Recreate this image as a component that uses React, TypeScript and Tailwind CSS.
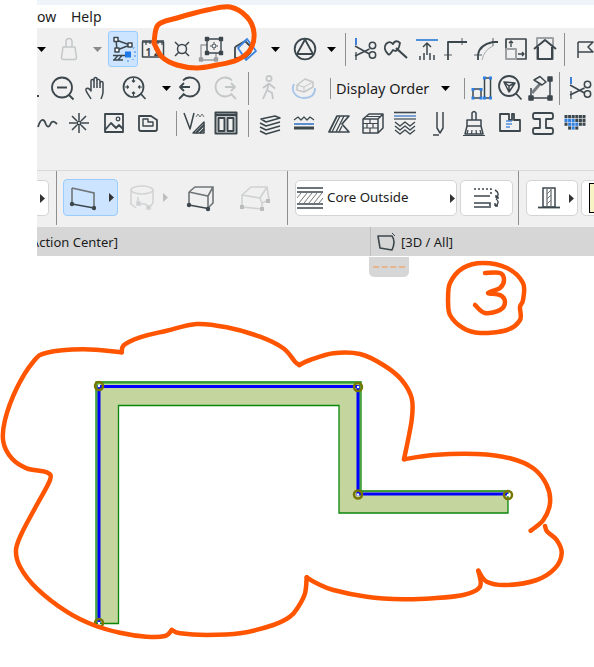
import React from "react";

const D = "#3c474d";
const G = "#c4c7c8";
const B = "#2f7fe0";

function S({ w, children }: { w: string; children?: React.ReactNode }) {
  return <div className={`flex flex-none items-center justify-center ${w}`}>{children}</div>;
}

function I({ children, c = D, sw = 1.5 }: { children: React.ReactNode; c?: string; sw?: number }) {
  return (
    <svg viewBox="0 0 30 30" fill="none" stroke={c} strokeWidth={sw} strokeLinejoin="round" className="h-[30px] w-[30px] flex-none overflow-visible">
      {children}
    </svg>
  );
}

function Tri({ gray }: { gray?: boolean }) {
  return (
    <svg viewBox="0 0 9 5" className="h-[5px] w-[9px] flex-none">
      <path d="M0 0H9L4.5 5Z" fill={gray ? "#8a8a8a" : "#000"} />
    </svg>
  );
}

function Sep({ h }: { h: string }) {
  return <div className={`w-px flex-none bg-[#8f8f8f] ${h}`} />;
}

function Arrow({ gray }: { gray?: boolean }) {
  return (
    <svg viewBox="0 0 5 9" className="h-[9px] w-[5px] flex-none">
      <path d="M0 0L5 4.5L0 9Z" fill={gray ? "#bdbdbd" : "#333"} />
    </svg>
  );
}

function Scissors() {
  return (
    <I>
      <path d="M5 4V11" stroke="#3f7fd8" strokeWidth={2} />
      <path d="M5 18V26" stroke="#7e8588" strokeWidth={2} />
      <path d="M4 12L18.5 20M4 22L18.5 15" />
      <circle cx={21.5} cy={11.5} r={3.2} />
      <circle cx={21.5} cy={21} r={3.2} />
    </I>
  );
}

function Button({ w, children }: { w: string; children: React.ReactNode }) {
  return (
    <div className={`flex h-[36px] flex-none items-center rounded-[5px] border border-[#d4d4d4] bg-white ${w}`}>{children}</div>
  );
}

type P = [number, number];

function spline(pts: P[]) {
  let d = `M${pts[0][0]} ${pts[0][1]}`;
  for (let i = 0; i < pts.length - 1; i++) {
    const p0 = pts[Math.max(i - 1, 0)];
    const p1 = pts[i];
    const p2 = pts[i + 1];
    const p3 = pts[Math.min(i + 2, pts.length - 1)];
    const c1x = p1[0] + (p2[0] - p0[0]) / 6;
    const c1y = p1[1] + (p2[1] - p0[1]) / 6;
    const c2x = p2[0] - (p3[0] - p1[0]) / 6;
    const c2y = p2[1] - (p3[1] - p1[1]) / 6;
    d += `C${c1x.toFixed(1)} ${c1y.toFixed(1)} ${c2x.toFixed(1)} ${c2y.toFixed(1)} ${p2[0]} ${p2[1]}`;
  }
  return d;
}

const z5 = (a: number[]) => {
  const r: P[] = [];
  for (let i = 0; i < a.length; i += 2) r.push([+(a[i] / 3).toFixed(1), +(a[i + 1] / 3 + 310).toFixed(1)]);
  return r;
};
const z6 = (a: number[]) => {
  const r: P[] = [];
  for (let i = 0; i < a.length; i += 2) r.push([+(a[i] / 3 + 290).toFixed(1), +(a[i + 1] / 3 + 340).toFixed(1)]);
  return r;
};

const cloud: P[][] = [
  [
    ...z5([365, 127, 372, 105, 420, 82, 500, 62, 590, 42, 680, 52, 780, 80, 850, 115, 885, 155]),
    ...z6([28, 75]),
  ],
  z6([28, 75, 60, 60, 130, 40, 210, 42, 280, 75, 335, 120, 365, 175, 365, 240, 342, 358]),
  z6([342, 358, 430, 345, 560, 342, 660, 355, 730, 385, 770, 435, 780, 490, 760, 540, 722, 572]),
  z6([765, 558, 772, 575, 800, 600, 815, 640, 795, 685, 740, 720, 650, 735, 590, 725, 565, 692]),
  z6([565, 692, 570, 740, 520, 765, 430, 775, 340, 778, 230, 770, 130, 750, 80, 730, 50, 712]),
  [
    ...z6([50, 712, 45, 760, 25, 800]),
    ...z5([870, 920, 820, 945, 720, 970, 620, 975, 540, 970, 515, 960]),
  ],
  z5([515, 960, 495, 978, 440, 980, 360, 968, 280, 945, 200, 905, 110, 835, 60, 770, 48, 720, 65, 670, 110, 585, 150, 510, 140, 487, 80, 475, 35, 445, 10, 395, 15, 330, 50, 235, 100, 155, 140, 128, 250, 118, 365, 127]),
];

const loop1: P[] = [[154, 43], [158, 25], [177, 18], [207, 10], [230, 7], [247, 17], [254, 33], [250, 50], [237, 60], [217, 65], [197, 68], [177, 65], [162, 57], [154, 43]];
const ring: P[] = [[448, 300], [450, 283], [463, 268], [483, 263], [507, 268], [523, 283], [523, 300], [520, 307], [520, 320], [507, 330], [480, 333], [463, 328], [450, 315], [448, 300]];
const three: P[] = [[485, 273], [500, 273], [504, 280], [500, 288], [488, 293], [500, 295], [505, 302], [500, 310], [485, 313], [475, 305]];

const nodes: P[] = [[99, 386], [99, 623], [358, 387], [358, 494.5], [508, 495]];

export default function App() {
  const gridCells: React.ReactNode[] = [];
  for (let r = 0; r < 4; r++) {
    for (let c = 0; c < 6; c++) {
      if (r === 3 && (c < 1 || c > 3)) continue;
      const blue = (r === 1 && c < 3) || (r === 2 && c >= 1 && c < 4) || (r === 3 && c === 2);
      gridCells.push(<rect key={`${r}-${c}`} x={4.5 + c * 3.6} y={7 + r * 3.8} width={3} height={3.2} fill={blue ? "#2f7fe0" : D} stroke="none" />);
    }
  }

  return (
    <div className="relative flex h-[667px] w-[594px] flex-col overflow-hidden bg-white font-['Noto_Sans',sans-serif] text-[#111]">
      <div className="ml-[37px] flex h-[256px] flex-none flex-col overflow-hidden">
        <div className="h-[5px] flex-none bg-[#eff4fa]" />
        <div className="flex h-[23px] flex-none items-center overflow-hidden text-[14px] text-[#1c1c1c]">
          <span className="w-[34px] flex-none whitespace-nowrap">ow</span>
          <span>Help</span>
        </div>

        <div className="flex flex-none flex-col bg-[#f0f0f0] pt-[3px]">
          {/* row 1 */}
          <div className="flex h-[36px] items-center">
            <S w="w-[8px]"><Tri /></S>
            <S w="w-[48px]">
              <I c={G}>
                <path d="M12 13V8Q12 4.5 15 4.5Q18 4.5 18 8V13" />
                <path d="M9 13H21L22.5 23.5Q22.5 25.5 20.5 25.5H9.5Q7.5 25.5 7.5 23.5Z" />
              </I>
            </S>
            <S w="w-[8px]"><Tri gray /></S>
            <div className="ml-[7px] flex h-[36px] w-[30px] flex-none items-center justify-center rounded-[3px] border border-[#99ccff] bg-[#cce4ff]">
              <I>
                <path d="M8 6L22 11L9 16Z" />
                <rect x={6} y={3.5} width={4} height={4} fill="#fff" />
                <rect x={20} y={9} width={4} height={4} fill="#fff" />
                <rect x={7} y={14} width={4} height={4} fill="#fff" />
                <path d="M5 21.5H17M5 26H15M6 26L10 21.5M10 26L14 21.5" strokeWidth={1.3} />
                <rect x={17} y={17.5} width={6} height={6} fill="#1e78e6" stroke="none" />
                <path d="M25 14.5l1.5-1M26 18h2M26 22h2M24.5 25l1 1M20 26v2" stroke="#3f8be6" strokeWidth={1} />
              </I>
            </div>
            <S w="w-[30px]">
              <I>
                <rect x={4.5} y={8} width={21} height={15} />
                <path d="M4 6.8H26M8 7v4M12 7v3M16 7v4M20 7v3M24 7v4" strokeWidth={1.2} />
                <text x={7.5} y={21.5} fontSize={10} fontWeight={700} fill={D} stroke="none">1 2</text>
              </I>
            </S>
            <S w="w-[28px]">
              <I>
                <circle cx={15} cy={15} r={4.5} />
                <path d="M8 8L12 12M22 8L18 12M8 22L12 18M22 22L18 18" />
              </I>
            </S>
            <S w="w-[30px]">
              <I sw={1.4}>
                <path d="M5 11H20V26H5Z" stroke="#9a9da0" />
                <rect x={3.5} y={24} width={3} height={3} stroke="#9a9da0" fill="#9a9da0" />
                <rect x={18.5} y={24} width={3} height={3} stroke="#9a9da0" fill="#9a9da0" />
                <path d="M11 5H25V19H11Z" fill="#f0f0f0" />
                <rect x={9.5} y={3.5} width={3} height={3} fill={D} />
                <rect x={23.5} y={3.5} width={3} height={3} fill={D} />
                <rect x={9.5} y={17.5} width={3} height={3} fill={D} />
                <rect x={23.5} y={17.5} width={3} height={3} fill={D} />
                <circle cx={18} cy={12} r={2} strokeWidth={1} />
                <path d="M18 8V9.5M18 14.5V16M14 12H15.5M20.5 12H22" strokeWidth={1} />
              </I>
            </S>
            <S w="w-[38px]">
              <I>
                <path d="M5 13L15 7L21 13M5 13V24H15L21 18" strokeWidth={1.8} />
                <path d="M17 5L26 17L16 26L8 14Z" stroke="#3d85e0" strokeWidth={1.8} />
              </I>
            </S>
            <S w="w-[22px]"><Tri /></S>
            <S w="w-[38px]">
              <I sw={1.8}>
                <circle cx={15} cy={15} r={10.3} />
                <path d="M15 5.5L23 20H7Z" />
              </I>
            </S>
            <S w="w-[14px]"><Tri /></S>
            <S w="w-[14px]"><Sep h="h-[33px]" /></S>
            <S w="w-[28px]"><Scissors /></S>
            <S w="w-[32px]">
              <I sw={1.8}>
                <path d="M5 10C8 7 10 8 12 10C14 6 17 7 19 9L18 13C17 16 15 18 12 16C10 19 8 22 7 20C4 17 3 13 5 10Z" />
                <path d="M15 14L26 24" strokeWidth={2.2} />
              </I>
            </S>
            <S w="w-[30px]">
              <I>
                <path d="M4 6H26" stroke="#4f8fdc" strokeWidth={2} />
                <path d="M15 9V21M11 13L15 9L19 13" />
                <path d="M8 26V22M12 26V19M18 26V19M22 26V21" />
              </I>
            </S>
            <S w="w-[28px]">
              <I>
                <path d="M21 4V11M3 21H11" stroke="#8b9093" />
                <path d="M7 26V8H26" strokeWidth={1.8} />
              </I>
            </S>
            <S w="w-[32px]">
              <I>
                <path d="M22 4V12M3 21H11" stroke="#8b9093" />
                <path d="M7 26V21Q8 11 22 8H27" strokeWidth={1.8} />
                <path d="M11 26Q13 16 22 12" stroke="#a7abad" strokeWidth={1} />
              </I>
            </S>
            <S w="w-[28px]">
              <I>
                <path d="M15 5H25V25H15M5 15V5H15" strokeWidth={1.7} />
                <rect x={5} y={15} width={10} height={10} stroke="#9ea1a3" strokeWidth={2} />
                <path d="M10 13V7M8 9L10 7L12 9M17 20H23M21 18L23 20L21 22" strokeWidth={1.3} />
              </I>
            </S>
            <S w="w-[30px]">
              <I>
                <rect x={7} y={4} width={16} height={21} stroke="#a0a3a5" strokeWidth={2} />
                <path d="M4 15L15 6L26 15M8 13V25H22V13" strokeWidth={2} />
              </I>
            </S>
            <S w="w-[8px]"><Sep h="h-[33px]" /></S>
            <S w="w-[34px]">
              <I>
                <path d="M8 8V24M8 8H23L18 13L23 18H8" />
              </I>
            </S>
          </div>

          {/* row 2 */}
          <div className="flex h-[42px] items-center">
            <S w="w-[10px]"><div className="h-[2px] w-[2px] translate-x-[-4px] translate-y-[8px] bg-[#3c474d]" /></S>
            <S w="w-[30px]">
              <I sw={1.8}>
                <circle cx={15} cy={14.5} r={10} />
                <path d="M10 14.5H20M22 22L26.5 26.5" />
              </I>
            </S>
            <S w="w-[38px]">
              <I>
                <path d="M10 26C8 22 4 18 5 16C6 14 9 16 10 18V8C10 6 13 6 13 8V6C13 4 16 4 16 6V7C16 6 19 6 19 8V10C19 8 22 8 22 10V19C22 22 21 24 20 26" />
                <path d="M13 8V15M16 7V15M19 10V15" />
              </I>
            </S>
            <S w="w-[38px]">
              <I sw={1.7}>
                <circle cx={14.5} cy={14} r={10} />
                <path d="M14.5 5V9M13 7.5L14.5 9L16 7.5M5.5 14H9.5M8 12.5L9.5 14L8 15.5M23.5 14H19.5M21 12.5L19.5 14L21 15.5M14.5 23V19M13 20.5L14.5 19L16 20.5" strokeWidth={1.2} />
                <path d="M22 21L26.5 26" />
              </I>
            </S>
            <S w="w-[26px]"><Tri /></S>
            <S w="w-[22px]">
              <I sw={1.8}>
                <path d="M8 7.5A9.5 9.5 0 1 1 8 20.5" />
                <path d="M5 14H15M9 10L5 14L9 18M9 21L4 26" />
              </I>
            </S>
            <div className="ml-[4px] flex w-[40px] flex-none items-center justify-center">
              <I sw={1.8} c={G}>
                <path d="M22 7.5A9.5 9.5 0 1 0 22 20.5" />
                <path d="M25 14H15M21 10L25 14L21 18M21 21L26 26" />
              </I>
            </div>
            <S w="w-[6px]"><Sep h="h-[33px]" /></S>
            <S w="w-[36px]">
              <I c={G} sw={1.8}>
                <circle cx={15} cy={5.5} r={2.6} />
                <path d="M15 10L13 17L9 26M13 17L18 20L19 26M15 10.5L9 15M15 10.5L21 15.5" />
              </I>
            </S>
            <S w="w-[34px]">
              <I c="#c5c7c8">
                <path d="M8 12L16 6L24 9V14L15 19L8 17Z" />
                <path d="M8 12L15 14L24 9M15 14V19" strokeWidth={1} />
                <path d="M5 11C1 19 8 25 15 25C20 25 26 23 26 15" stroke="#a8c6e8" strokeWidth={1.8} />
              </I>
            </S>
            <div className="ml-[5px] flex w-[8px] flex-none justify-center"><Sep h="h-[21px]" /></div>
            <span className="ml-[2px] w-[95px] flex-none whitespace-nowrap pt-[1px] text-[14.5px] text-[#1c1c1c]">Display Order</span>
            <S w="w-[28px]"><Tri /></S>
            <S w="w-[10px]"><Sep h="h-[21px]" /></S>
            <S w="w-[24px]">
              <I>
                <rect x={7} y={16} width={8} height={9} strokeWidth={1.5} />
                <rect x={18.5} y={5} width={6} height={20} strokeWidth={1.5} />
                <path d="M5.5 15h3v3h-3zM13.5 15h3v3h-3zM5.5 23.5h3v3h-3zM13.5 23.5h3v3h-3zM17 3.5h3v3h-3zM23 3.5h3v3h-3zM17 23.5h3v3h-3zM23 23.5h3v3h-3z" fill={B} stroke="none" />
              </I>
            </S>
            <S w="w-[34px]">
              <I sw={1.8}>
                <circle cx={14} cy={13} r={10} />
                <path d="M9 9L20 10L14 19Z M14 13L9 9M14 13L20 10M14 13V19" strokeWidth={1.5} />
                <path d="M21 20.5L26.5 26.5" />
              </I>
            </S>
            <S w="w-[26px]">
              <I sw={1.5}>
                <path d="M25 6V25H6V15" />
                <rect x={23} y={4} width={4} height={4} fill={D} />
                <rect x={23} y={23} width={4} height={4} fill={D} />
                <rect x={4} y={23} width={4} height={4} fill={D} />
                <path d="M7 20L15 11" strokeWidth={3} stroke="#777d80" />
                <path d="M9 7L15 3.5L21 9L17 12Z" fill="#f0f0f0" />
              </I>
            </S>
            <S w="w-[12px]"><Sep h="h-[33px]" /></S>
            <S w="w-[32px]"><Scissors /></S>
          </div>

          {/* row 3 */}
          <div className="flex h-[28px] items-center">
            <S w="w-[20px]">
              <I sw={1.8}>
                <path d="M6 19C8 12 11 10 13 14C15 20 17 20 19 15C20 13 22 13 25 16" />
              </I>
            </S>
            <S w="w-[44px]">
              <I sw={1.5}>
                <circle cx={15} cy={15} r={1.8} />
                <path d="M15 5V12.5M15 17.5V25M5 15H12.5M17.5 15H25M8 8L13 13M17 17L22 22M22 8L17 13M13 17L8 22" />
              </I>
            </S>
            <S w="w-[26px]">
              <I sw={1.8}>
                <rect x={6} y={6} width={18} height={18} />
                <path d="M6 22L12 15L17 20L20 17L24 21" />
                <circle cx={19} cy={11} r={1.8} strokeWidth={1.3} />
              </I>
            </S>
            <S w="w-[42px]">
              <I sw={1.8}>
                <path d="M6 8H18L24 12V21Q24 23 22 23H8Q6 23 6 21Z" />
                <path d="M10 15V11H15V14H20V18H10Z" strokeWidth={1.4} />
              </I>
            </S>
            <S w="w-[14px]"><Sep h="h-[25px]" /></S>
            <S w="w-[22px]">
              <I>
                <path d="M5 5L11 21L15 5" />
                <path d="M17 9L19 6L21 9M21 9L23 6L25 9" stroke="#6f7578" strokeWidth={1} />
                <path d="M14 25L25 14V25Z" fill="#f0f0f0" />
                <path d="M17 25L25 17M21 25L25 21" strokeWidth={2} />
              </I>
            </S>
            <S w="w-[42px]">
              <I sw={2}>
                <rect x={4.5} y={4.5} width={21} height={21} />
                <path d="M4 7H26" strokeWidth={2.5} />
                <rect x={7.5} y={10} width={6} height={13} />
                <rect x={16.5} y={10} width={6} height={13} />
              </I>
            </S>
            <S w="w-[2px]"><Sep h="h-[27px]" /></S>
            <S w="w-[42px]">
              <I sw={1.6}>
                <path d="M6 11L20 8L25 10L11 14Z" />
                <path d="M5 15L11 18L25 14M5 19L11 22L25 18M5 23L11 26L25 22" />
              </I>
            </S>
            <S w="w-[26px]">
              <I>
                <path d="M5 12L9 9L12 12L15 9L18 12L21 9L25 12" strokeWidth={1.2} />
                <path d="M5 16H25" stroke="#5b8fd0" strokeWidth={2} />
                <path d="M5 20H25" strokeWidth={3} />
              </I>
            </S>
            <S w="w-[44px]">
              <I sw={1.7}>
                <path d="M5 24L13 8H25L18 16L25 24Z" />
                <path d="M8 24L16 8M12 24L20 8M15 24L18 18" strokeWidth={1.3} />
              </I>
            </S>
            <S w="w-[24px]">
              <I>
                <path d="M5 11H20V25H5ZM5 11L11 6H25L20 11M25 6V20L20 25" />
                <path d="M5 15.5H20M5 20H20M12 11V15.5M9 15.5V20M15 15.5V20M12 20V25" strokeWidth={1.2} />
                <path d="M8 8.5H22" strokeWidth={1} />
              </I>
            </S>
            <S w="w-[40px]">
              <I sw={1.4}>
                <path d="M4 4.5H26" strokeWidth={1.6} />
                <path d="M4 8H26" stroke="#5b8fd0" strokeWidth={1.6} />
                <path d="M4 11H26" strokeWidth={1.2} />
                <path d="M5 14L10 18L15 14L20 18L25 14M5 18L10 22L15 18L20 22L25 18M5 22L10 26L15 22L20 26L25 22" />
              </I>
            </S>
            <S w="w-[30px]">
              <I>
                <path d="M12 4V20L15 25L18 20V4" />
                <path d="M8 27H14" />
              </I>
            </S>
            <S w="w-[38px]">
              <I>
                <path d="M13 12V5Q15 2 17 5V12" />
                <path d="M8 12H22V18H8Z" />
                <path d="M8 18L6 26H24L22 18" />
                <path d="M4 27.5H26M9 22L8 26M13 22L12.5 26M17 22L17.5 26M21 22L22 26" strokeWidth={1.2} />
              </I>
            </S>
            <S w="w-[34px]">
              <I sw={1.8}>
                <path d="M5 6H14V12H17V6H19V12H25V23H5Z" />
                <path d="M11 13H17M11 16H17M11 19H15" stroke="#4f8fdc" strokeWidth={1.4} />
              </I>
            </S>
            <S w="w-[32px]">
              <I sw={1.8}>
                <path d="M7 5H23Q25 5 25 7V9Q25 11 23 11H18V20H23Q25 20 25 22V24Q25 26 23 26H7Q5 26 5 24V22Q5 20 7 20H12V11H7Q5 11 5 9V7Q5 5 7 5Z" />
              </I>
            </S>
            <S w="w-[32px]">
              <I>{gridCells}</I>
            </S>
          </div>

          <div className="h-[33px]" />
        </div>

        {/* row 4 */}
        <div className="flex h-[57px] flex-none border-t border-[#d9d9d9] bg-[#f0f0f0]">
          <div className="mt-[9px] flex h-[36px] w-[12px] flex-none items-center justify-center rounded-r-[5px] border border-l-0 border-[#d4d4d4] bg-white">
            <Arrow />
          </div>
          <div className="ml-[7px] h-[54px] w-px flex-none bg-[#8f8f8f]" />
          <div className="ml-[6px] mt-[8px] flex h-[37px] w-[55px] flex-none items-center rounded-[4px] border border-[#99ccff] bg-[#cce4ff]">
            <svg viewBox="0 0 36 30" fill="none" className="h-[30px] w-[36px] flex-none overflow-visible">
              <path d="M8 5L30 10V25" stroke="#6f7578" strokeWidth={1.6} />
              <path d="M8 5V21" stroke="#6f7578" strokeWidth={1.6} />
              <path d="M8 21L30 25" stroke={D} strokeWidth={1.6} />
              <circle cx={8} cy={21} r={2.2} fill={D} />
              <circle cx={30} cy={25} r={2.2} fill={D} />
            </svg>
            <div className="ml-[9px]"><Arrow /></div>
          </div>
          <div className="flex h-[54px] w-[54px] flex-none items-center justify-start">
            <svg viewBox="0 0 54 30" fill="none" className="h-[30px] w-[54px] flex-none overflow-visible" stroke="#d2d4d5" strokeWidth={1.6}>
              <ellipse cx={24} cy={7} rx={11} ry={4} />
              <path d="M13 7V21L18 25M35 7V20L31 25" />
              <path d="M20 14V21H27L31 24" />
              <rect x={19} y={19} width={3} height={3} fill="#c2c4c5" />
              <rect x={29} y={23} width={3} height={3} fill="#c2c4c5" />
              <path d="M45 10L50 14.5L45 19Z" fill="#bdbdbd" stroke="none" />
            </svg>
          </div>
          <div className="flex h-[54px] w-[58px] flex-none items-center justify-center">
            <svg viewBox="0 0 30 30" fill="none" className="h-[30px] w-[30px] flex-none overflow-visible" stroke="#6f7578" strokeWidth={1.6}>
              <path d="M3 9L9 4H27V20L22 25M3 9L22 13L27 4M22 13V25M3 9V22" />
              <path d="M3 22L22 25.5" stroke={D} />
              <circle cx={3} cy={22} r={2.2} fill={D} stroke="none" />
              <circle cx={22} cy={26} r={2.2} fill={D} stroke="none" />
            </svg>
          </div>
          <div className="flex h-[54px] w-[50px] flex-none items-center justify-center">
            <svg viewBox="0 0 32 30" fill="none" className="h-[30px] w-[32px] flex-none overflow-visible" stroke="#cfd1d2" strokeWidth={1.6}>
              <path d="M3 12L12 4H28L30 17L23 20V26M3 12L21 15L28 4M21 15L23 20M3 12V24M3 24L23 26" />
              <rect x={1} y={22} width={4} height={4} fill="#b9bbbc" stroke="none" />
              <rect x={21} y={24} width={4} height={4} fill="#b9bbbc" stroke="none" />
              <rect x={27} y={16} width={4} height={4} fill="#b9bbbc" stroke="none" />
            </svg>
          </div>
          <div className="ml-[7px] h-[54px] w-px flex-none bg-[#8f8f8f]" />
          <div className="ml-[7px] mt-[9px]">
            <Button w="w-[162px]">
              <svg viewBox="0 0 26 22" fill="none" className="ml-[1px] h-[22px] w-[26px] flex-none" stroke={D}>
                <path d="M0 1H26M0 5H26M0 17H26M0 21H26" strokeWidth={1.6} />
                <path d="M2 16L10 6M7 16L15 6M12 16L20 6M17 16L25 6M0 11L4 6M22 16L26 11" stroke="#777" strokeWidth={1} />
              </svg>
              <span className="ml-[4px] w-[123px] flex-none whitespace-nowrap text-[13.3px] text-[#1c1c1c]">Core Outside</span>
              <Arrow />
            </Button>
          </div>
          <div className="ml-[3px] mt-[9px]">
            <Button w="w-[53px]">
              <svg viewBox="0 0 28 22" fill="none" className="ml-[12px] h-[22px] w-[28px] flex-none" stroke={D} strokeWidth={1.6}>
                <path d="M1 2H18V8" strokeDasharray="2 2" />
                <path d="M1 9H17M1 16H17V19M1 20H18" />
                <path d="M22 3C26 5 26 9 23 11M23 11V8M23 11H26M22 19C26 17 26 14 23 12M22 19V16M22 19H25" strokeWidth={1.4} />
              </svg>
            </Button>
          </div>
          <div className="ml-[5px] h-[54px] w-px flex-none bg-[#8f8f8f]" />
          <div className="ml-[7px] mt-[9px]">
            <Button w="w-[52px]">
              <svg viewBox="0 0 22 22" fill="none" className="ml-[11px] h-[22px] w-[22px] flex-none" stroke={D} strokeWidth={1.5}>
                <rect x={5} y={1} width={12} height={19} />
                <path d="M9 2V19M13 2V19" strokeWidth={1} />
                <path d="M9 7L13 3M9 12L13 8M9 17L13 13" stroke="#777" strokeWidth={1} />
                <path d="M0 20.5H22" strokeWidth={1.8} />
              </svg>
              <div className="ml-[9px]"><Arrow /></div>
            </Button>
          </div>
          <div className="ml-[3px] mt-[9px]">
            <Button w="w-[30px]">
              <div className="ml-[7px] h-[30px] w-[6px] flex-none border border-black bg-[#f8f3c4]" />
            </Button>
          </div>
        </div>

        {/* status bar */}
        <div className="flex h-[29px] flex-none items-center bg-[#d6d6d6] text-[13px] text-[#1c1c1c]">
          <div className="flex w-[81px] flex-none justify-end overflow-hidden whitespace-nowrap pt-[3px]">[Action Center]</div>
          <div className="ml-[252px] h-full w-px flex-none bg-[#bdbdbd]" />
          <svg viewBox="0 0 20 20" fill="none" stroke={D} strokeWidth={1.6} strokeLinejoin="round" className="ml-[6px] h-[20px] w-[20px] flex-none">
            <path d="M1 4H15Q19 9 15 18L3 16Z" />
            <path d="M15 1L18 4" strokeWidth={1} />
          </svg>
          <span className="ml-[4px] whitespace-nowrap pt-[3px]">[3D / All]</span>
        </div>
      </div>

      {/* canvas */}
      <div className="relative flex-1">
        <div className="absolute left-[369px] top-[1px] flex h-[20px] w-[40px] items-center justify-center rounded-b-[5px] bg-[#d6d6d6]">
          <div className="w-[32px] border-t-2 border-dashed border-[#e8b48c]" />
        </div>
        <svg viewBox="0 256 594 411" fill="none" className="h-[411px] w-[594px]">
          <path d="M96 382H361V491H508V513H339V405.5H118.5V623.5H96Z" fill="#c5d59e" stroke="#0a870a" strokeWidth={1.3} />
          <path d="M97.5 383.5H359.5V492.5" stroke="#5cc05c" strokeWidth={1.2} />
          <path d="M97.5 383.5V622" stroke="#5cc05c" strokeWidth={1.2} />
          <path d="M99 623V386.5H358V494H508" stroke="#0000ff" strokeWidth={3} strokeLinejoin="miter" />
          {nodes.map(([x, y]) => (
            <g key={`${x}-${y}`}>
              <circle cx={x} cy={y} r={4} stroke="#767600" strokeWidth={2.5} />
              <circle cx={x} cy={y} r={1.2} fill="#fff" />
            </g>
          ))}
        </svg>
      </div>

      {/* hand-drawn annotations over the page */}
      <svg viewBox="0 0 594 667" fill="none" stroke="#ff5500" strokeWidth={5} strokeLinecap="round" strokeLinejoin="round" className="pointer-events-none absolute left-0 top-0 h-[667px] w-[594px]">
        <path d={spline(loop1)} />
        <path d={spline(ring)} strokeWidth={4.5} />
        <path d={spline(three)} strokeWidth={4.5} />
        {cloud.map((seg, i) => (
          <path key={i} d={spline(seg)} strokeWidth={4.5} />
        ))}
      </svg>
    </div>
  );
}
